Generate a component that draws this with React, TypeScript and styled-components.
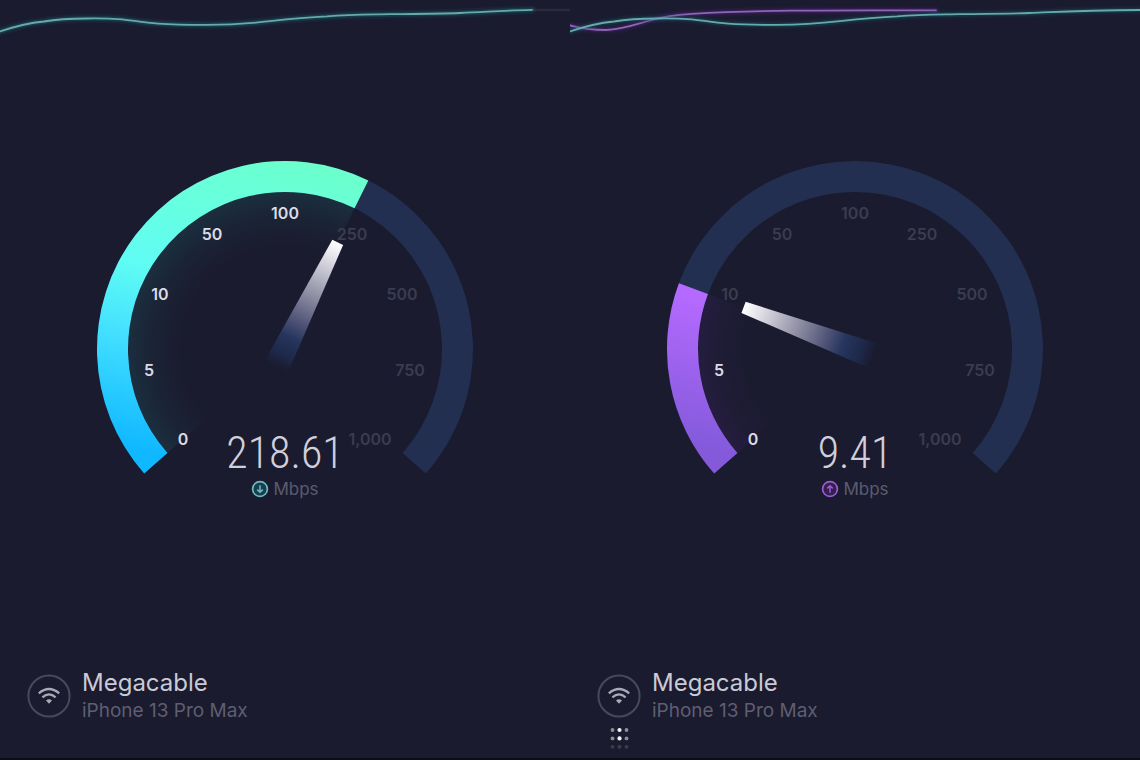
import React from "react";
import styled, { createGlobalStyle } from "styled-components";

const GlobalStyle = createGlobalStyle`
  *, *::before, *::after { box-sizing: border-box; }
  body {
    margin: 0;
    background: #1a1b2e;
    color: #d4d3df;
    font-family: Inter, "Open Sans", sans-serif;
  }
`;

const Page = styled.main`
  display: grid;
  grid-template-columns: repeat(2, minmax(0, 1fr));
  min-height: 100vh;
  background: #1a1b2e;
  border-bottom: 2px solid #0d0d18;
`;

const Panel = styled.section`
  display: flex;
  flex-direction: column;
`;

const Trace = styled.svg`
  display: block;
  width: 100%;
  height: 60px;
`;

const GaugeArea = styled.div`
  flex: 1;
  display: grid;
  justify-content: center;
  align-content: start;
  padding: 101px 16px 32px;
`;

const Dial = styled.svg`
  grid-area: 1 / 1;
  display: block;
  width: 376px;
  max-width: 100%;
`;

const DialLabel = styled.text<{ $lit: boolean }>`
  font-size: 16px;
  font-weight: 600;
  text-anchor: middle;
  fill: ${(p) => (p.$lit ? "#dcdbe6" : "#3c3c4f")};
`;

const Readout = styled.div`
  grid-area: 1 / 1;
  align-self: end;
  display: flex;
  flex-direction: column;
  align-items: center;
  padding-bottom: 2px;
`;

const Speed = styled.output`
  font-family: "Roboto Condensed", Roboto, sans-serif;
  font-weight: 300;
  font-size: 44px;
  line-height: 52px;
  color: #d0cfdc;
`;

const Unit = styled.div`
  display: flex;
  align-items: center;
  gap: 4px;
  font-size: 17px;
  line-height: 20px;
  color: #5c5b6e;
`;

const Footer = styled.footer`
  display: grid;
  grid-template-columns: 44px 1fr;
  column-gap: 11px;
  align-items: center;
  height: 90px;
  padding: 0 27px;
  align-content: start;
`;

const Badge = styled.svg`
  display: block;
  width: 44px;
  height: 44px;
`;

const Provider = styled.h2`
  margin: 0;
  font-size: 24px;
  line-height: 30px;
  font-weight: 400;
  color: #cac9d6;
`;

const Device = styled.p`
  margin: 0;
  font-size: 19px;
  line-height: 26px;
  color: #5f5e72;
`;

const Loader = styled.svg`
  display: block;
  width: 24px;
  height: 24px;
  margin: 2px 0 0 11px;
`;

const CX = 188;
const CY = 188;
const START = -131.5;
const END = 131.5;

// Angles are in degrees clockwise from twelve o'clock.
const at = (r: number, deg: number) => {
  const a = (deg * Math.PI) / 180;
  return `${(CX + r * Math.sin(a)).toFixed(2)} ${(CY - r * Math.cos(a)).toFixed(2)}`;
};

const ring = (outer: number, inner: number, from: number, to: number) => {
  const large = to - from > 180 ? 1 : 0;
  return `M${at(outer, from)} A${outer} ${outer} 0 ${large} 1 ${at(outer, to)} L${at(inner, to)} A${inner} ${inner} 0 ${large} 0 ${at(inner, from)} Z`;
};

const MARKS = [
  { text: "0", x: 86, y: 284 },
  { text: "5", x: 52, y: 215 },
  { text: "10", x: 63, y: 139 },
  { text: "50", x: 115, y: 79 },
  { text: "100", x: 188, y: 58 },
  { text: "250", x: 255, y: 79 },
  { text: "500", x: 305, y: 139 },
  { text: "750", x: 313, y: 215 },
  { text: "1,000", x: 273, y: 284 },
];

type Reading = {
  id: string;
  label: string;
  value: string;
  angle: number;
  lit: number;
  accent: string;
  iconFill: string;
  glow: string;
  stops: [string, string][];
  direction: "down" | "up";
};

const DOWNLOAD: Reading = {
  id: "download",
  label: "Download speed",
  value: "218.61",
  angle: 26.3,
  lit: 5,
  accent: "#6fb9c3",
  iconFill: "#17404f",
  glow: "#1c5560",
  stops: [["0", "#6cffcb"], ["0.2", "#68ffde"], ["0.45", "#5ffcf4"], ["0.68", "#42dfff"], ["1", "#10b8ff"]],
  direction: "down",
};

const UPLOAD: Reading = {
  id: "upload",
  label: "Upload speed",
  value: "9.41",
  angle: -69.5,
  lit: 2,
  accent: "#9c5cd0",
  iconFill: "#33204f",
  glow: "#3a2060",
  stops: [["0", "#b76aff"], ["0.55", "#b56aff"], ["1", "#845adb"]],
  direction: "up",
};

function DirectionIcon({ reading }: { reading: Reading }) {
  return (
    <svg width="18" height="18" viewBox="0 0 18 18" fill="none" aria-hidden="true">
      <circle cx="9" cy="9" r="7.4" fill={reading.iconFill} stroke={reading.accent} strokeWidth="1.7" />
      <path
        d={reading.direction === "down" ? "M9 5.3V12M6.2 9.6 9 12.3l2.8-2.7" : "M9 12.7V6M6.2 8.4 9 5.7l2.8 2.7"}
        stroke={reading.accent}
        strokeWidth="1.5"
      />
    </svg>
  );
}

function Gauge({ reading }: { reading: Reading }) {
  const { id, angle, glow, stops } = reading;
  return (
    <GaugeArea>
      <Dial viewBox="0 0 376 340" role="img" aria-label={reading.label}>
        <defs>
          <linearGradient id={`${id}-arc`} gradientUnits="userSpaceOnUse" x1="220" y1="0" x2="140" y2="312">
            {stops.map(([offset, color]) => (
              <stop key={offset} offset={offset} stopColor={color} />
            ))}
          </linearGradient>
          <radialGradient id={`${id}-glow`} gradientUnits="userSpaceOnUse" cx={CX} cy={CY} r="157">
            <stop offset="0.66" stopColor={glow} stopOpacity="0" />
            <stop offset="0.86" stopColor={glow} stopOpacity="0.16" />
            <stop offset="1" stopColor={glow} stopOpacity="0.34" />
          </radialGradient>
          <linearGradient id={`${id}-needle`} gradientUnits="userSpaceOnUse" x1="0" y1="-119" x2="0" y2="20">
            <stop offset="0" stopColor="#ffffff" />
            <stop offset="0.12" stopColor="#e2e1e9" />
            <stop offset="0.4" stopColor="#9594a8" />
            <stop offset="0.62" stopColor="#55587a" />
            <stop offset="0.76" stopColor="#27365f" />
            <stop offset="0.9" stopColor="#1f2c50" stopOpacity="0.8" />
            <stop offset="1" stopColor="#1e2a4e" stopOpacity="0" />
          </linearGradient>
        </defs>
        <path d={ring(188, 157, START, END)} fill="#222f50" />
        <path d={ring(157, 100, START, angle)} fill={`url(#${id}-glow)`} />
        <path d={ring(188, 157, START, angle)} fill={`url(#${id}-arc)`} />
        {MARKS.map((m, i) => (
          <DialLabel key={m.text} x={m.x} y={m.y} $lit={i < reading.lit}>
            {m.text}
          </DialLabel>
        ))}
        <path
          d="M-6 -119H6L13 20H-13Z"
          fill={`url(#${id}-needle)`}
          transform={`translate(${CX} ${CY}) rotate(${angle})`}
        />
      </Dial>
      <Readout>
        <Speed>{reading.value}</Speed>
        <Unit>
          <DirectionIcon reading={reading} />
          <span>Mbps</span>
        </Unit>
      </Readout>
    </GaugeArea>
  );
}

const TEAL_WAVE =
  "M0 31.5C16 26 28 23 44 21.5C58 19 72 18.5 87 18.5C100 18.3 110 18.5 122 19.3C136 21 145 22.6 158 23.6C172 24.6 185 24.9 205 24.9C232 25 250 23.5 270 21.2C290 19 308 17.3 327 16.4C350 14.6 365 14.7 390 14.2C420 13.8 440 13.6 460 13";
const PURPLE_WAVE =
  "M0 25.5C8 27 14 29.8 36 30C54 29.5 66 24 80 20.5C92 16.5 104 14.8 122 13.8C150 12.2 180 11.2 220 10.7C270 10.1 320 10.4 366 10.4";

function Wave({ d, color, glow }: { d: string; color: string; glow: string }) {
  return (
    <g fill="none" strokeLinecap="round">
      <path d={d} stroke={glow} strokeWidth="9" opacity="0.12" />
      <path d={d} stroke={glow} strokeWidth="5" opacity="0.3" />
      <path d={d} stroke={color} strokeWidth="1.8" />
    </g>
  );
}

function Connection({ busy }: { busy?: boolean }) {
  return (
    <Footer>
      <Badge viewBox="0 0 44 44" fill="none" aria-hidden="true">
        <circle cx="22" cy="22" r="20.6" stroke="#4a495c" strokeWidth="2" />
        <g stroke="#aaa9b8" strokeWidth="2.3">
          <path d="M11.8 19.3Q22 10.7 32.2 19.3" />
          <path d="M15.4 23.3Q22 17.5 28.6 23.3" />
        </g>
        <path d="M19 26.5Q22 23.9 25 26.5L22 29.7Z" fill="#aaa9b8" />
      </Badge>
      <div>
        <Provider>Megacable</Provider>
        <Device>iPhone 13 Pro Max</Device>
      </div>
      {busy && (
        <Loader viewBox="0 0 24 24" role="img" aria-label="Loading">
          {[0, 1, 2].map((row) =>
            [0, 1, 2].map((col) => (
              <circle
                key={`${row}${col}`}
                cx={4.5 + col * 7}
                cy={4 + row * 8.4}
                r={col === 1 ? 2.1 : 1.9}
                fill="#ffffff"
                opacity={row === 2 ? 0.14 : col === 1 ? 0.95 : 0.5}
              />
            ))
          )}
        </Loader>
      )}
    </Footer>
  );
}

export default function App() {
  return (
    <>
      <GlobalStyle />
      <Page>
        <Panel>
          <Trace viewBox="0 0 570 60" preserveAspectRatio="none" aria-hidden="true">
            <path d="M532 10H570" stroke="#2b2b3e" strokeWidth="2.5" />
            <Wave d={`${TEAL_WAVE}C485 12 505 10.5 532 9.8`} color="#68a9ad" glow="#1c6a72" />
          </Trace>
          <Gauge reading={DOWNLOAD} />
          <Connection />
        </Panel>
        <Panel>
          <Trace viewBox="0 0 570 60" preserveAspectRatio="none" aria-hidden="true">
            <Wave d={PURPLE_WAVE} color="#8a68b4" glow="#572080" />
            <Wave d={`${TEAL_WAVE}C485 12 515 10.3 570 10`} color="#68a9ad" glow="#1c5a62" />
          </Trace>
          <Gauge reading={UPLOAD} />
          <Connection busy />
        </Panel>
      </Page>
    </>
  );
}
